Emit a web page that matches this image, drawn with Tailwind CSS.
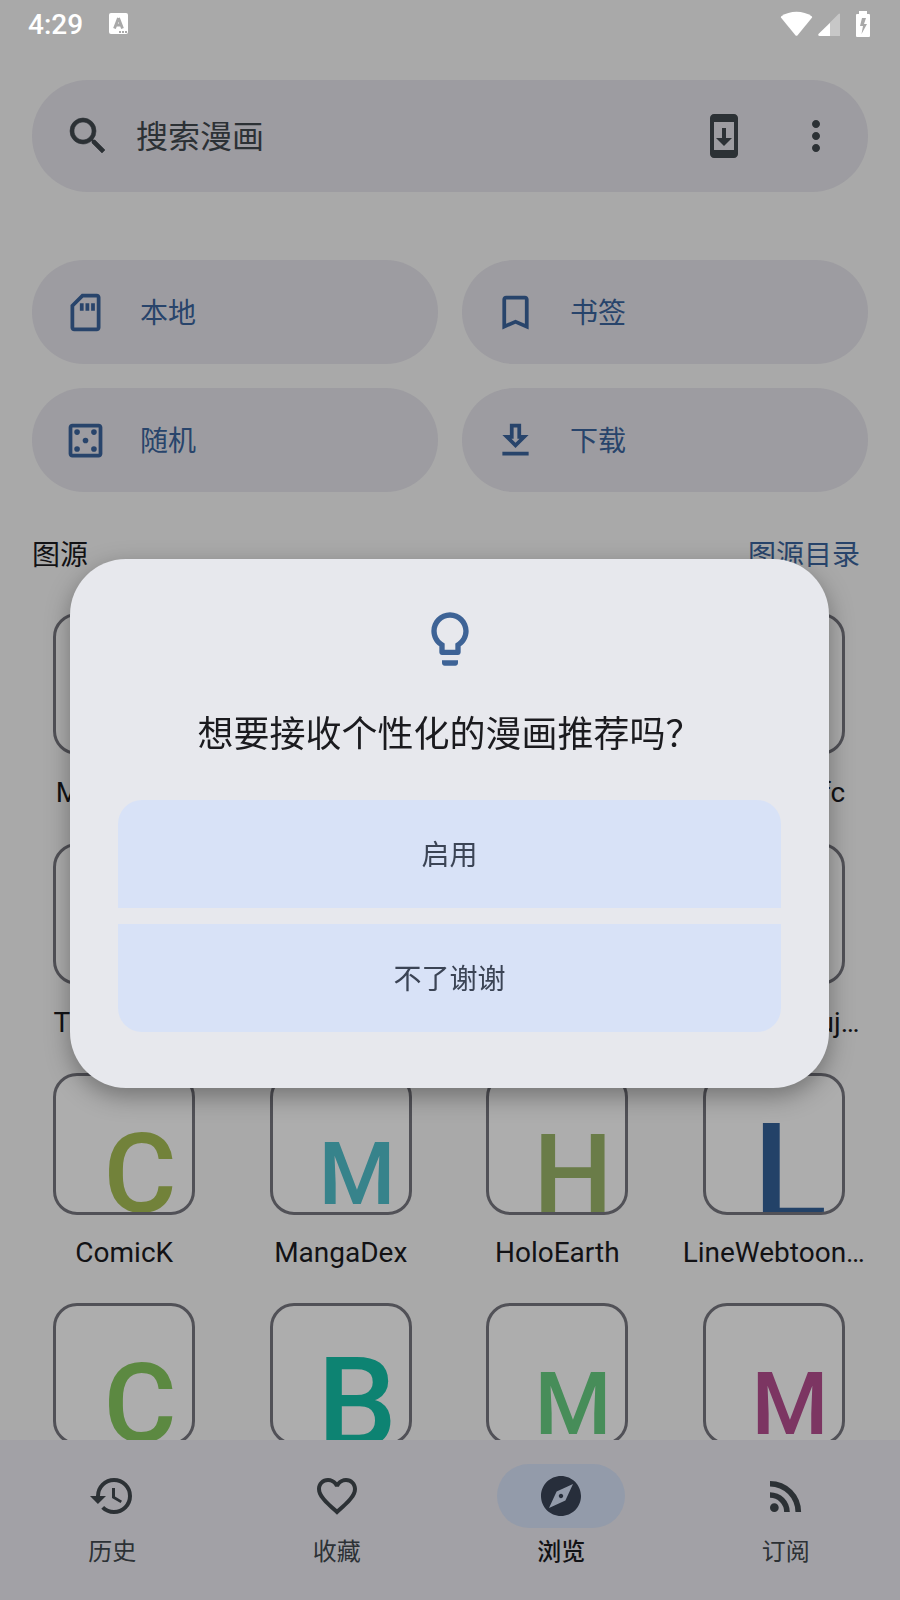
<!DOCTYPE html>
<html lang="zh-CN">
  <head>
    <meta charset="utf-8" />
    <meta name="viewport" content="width=device-width, initial-scale=1.0" />
    <title>浏览</title>
    <script src="https://cdn.jsdelivr.net/npm/@tailwindcss/browser@4"></script>
  </head>
  <body class="flex h-screen flex-col overflow-hidden bg-[#a9a9a9] font-[Roboto,'Noto_Sans_CJK_SC',sans-serif] text-[28px] leading-8 text-[#121215]">
    <!-- status bar -->
    <div class="flex h-12 shrink-0 items-center pr-[30px] pl-7 text-white">
      <span class="pt-0.5 font-medium">4:29</span>
      <svg class="ml-[26px] h-[22px] w-[19px]" viewBox="0 0 19 22" aria-hidden="true">
        <rect y="0" width="19" height="21" rx="2" fill="#fff" />
        <path d="M9.500 5 5.500 15.500M9.500 5 13.500 15.500M6.500 12h6" fill="none" stroke="#a9a9a9" stroke-width="2.800" />
        <path d="M10 18h2v2h-2zM13 18h2v2h-2zM16 18h2v2h-2z" fill="#a9a9a9" />
      </svg>
      <svg class="ml-auto h-[26px] w-[90px]" viewBox="0 0 90 26" fill="#fff" aria-hidden="true">
        <path d="M1.300 5.300C9.500-.7 23.500-.7 31.700 5.300Q32.500 6 31.900 6.800L17.600 24.200Q16.500 25.200 15.400 24.200L1.100 6.800Q.5 6 1.300 5.300Z" />
        <path d="M60 3v22H39.500q-2-.5-1-2L58 3.500Q59.500 2 60 3Z" fill-opacity=".35" />
        <path d="M50 12v13H39.500q-2-.5-1-2Z" />
        <path fill-rule="evenodd" d="M79 0h8v3h2q1 0 1 1v21q0 1-1 1H77q-1 0-1-1V4q0-1 1-1h2zM82 7l-2 8h3l-1.500 8 5.500-10h-3l2-6z" />
      </svg>
    </div>

    <main class="min-h-0 flex-1 overflow-hidden px-8 pt-8">
      <form class="flex items-center rounded-full bg-[#9d9ca1] px-7 py-8 text-[#2c3135]" role="search">
        <label for="search" aria-label="搜索" class="ml-1">
          <svg class="size-12" viewBox="0 0 24 24" fill="currentColor" stroke="currentColor" stroke-width=".3"><path d="M15.500 14h-.79l-.28-.27A6.471 6.471 0 0 0 16 9.500 6.500 6.500 0 1 0 9.500 16c1.610 0 3.090-.59 4.230-1.570l.27.28v.79l5 4.990L20.490 19l-4.990-5zm-6 0C7.010 14 5 11.990 5 9.500S7.010 5 9.500 5 14 7.010 14 9.500 11.990 14 9.500 14z" /></svg>
        </label>
        <input id="search" type="text" placeholder="搜索漫画" class="ml-6 min-w-0 flex-1 bg-transparent pt-0.5 text-[32px] leading-10 outline-none placeholder:text-[#2c3135]" />
        <button type="button" aria-label="更新图源">
          <svg class="size-12" viewBox="0 0 24 24" fill="currentColor"><path d="M17 1.010 7 1c-1.100 0-2 .9-2 2v18c0 1.100.9 2 2 2h10c1.100 0 2-.9 2-2V3c0-1.100-.9-1.990-2-1.990zM17 19H7V5h10v14zm-1-6h-3V8h-2v5H8l4 4 4-4z" /></svg>
        </button>
        <button type="button" aria-label="更多选项" class="ml-11">
          <svg class="size-12" viewBox="0 0 24 24" fill="currentColor"><path d="M12 8c1.100 0 2-.9 2-2s-.9-2-2-2-2 .9-2 2 .9 2 2 2zm0 2c-1.100 0-2 .9-2 2s.9 2 2 2 2-.9 2-2-.9-2-2-2zm0 6c-1.100 0-2 .9-2 2s.9 2 2 2 2-.9 2-2-.9-2-2-2z" /></svg>
        </button>
      </form>

      <div class="mt-[68px] grid grid-cols-2 gap-6 text-[#28446b]">
        <button class="flex h-[104px] items-center gap-8 rounded-full bg-[#9d9ca1] pl-[31px]">
          <svg class="size-[45px]" viewBox="0 0 24 24" fill="currentColor"><path d="M18 2h-8L4 8v12c0 1.100.9 2 2 2h12c1.100 0 2-.9 2-2V4c0-1.100-.9-2-2-2zm0 18H6V8.830L10.830 4H18v16zM9 7h2v4H9zm3 0h2v4h-2zm3 0h2v4h-2z" /></svg>
          <span class="pt-1">本地</span>
        </button>
        <button class="flex h-[104px] items-center gap-8 rounded-full bg-[#9d9ca1] pl-[31px]">
          <svg class="size-[45px]" viewBox="0 0 24 24" fill="currentColor"><path d="M17 3H7c-1.100 0-2 .9-2 2v16l7-3 7 3V5c0-1.100-.9-2-2-2zm0 15-5-2.180L7 18V5h10v13z" /></svg>
          <span class="pt-1">书签</span>
        </button>
        <button class="flex h-[104px] items-center gap-8 rounded-full bg-[#9d9ca1] pl-[31px]">
          <svg class="size-[45px]" viewBox="0 0 24 24" fill="currentColor"><path d="M19 5v14H5V5h14m0-2H5c-1.100 0-2 .9-2 2v14c0 1.100.9 2 2 2h14c1.100 0 2-.9 2-2V5c0-1.100-.9-2-2-2z" /><circle cx="7.500" cy="7.500" r="1.500" /><circle cx="16.500" cy="7.500" r="1.500" /><circle cx="12" cy="12" r="1.500" /><circle cx="7.500" cy="16.500" r="1.500" /><circle cx="16.500" cy="16.500" r="1.500" /></svg>
          <span class="pt-1">随机</span>
        </button>
        <button class="flex h-[104px] items-center gap-8 rounded-full bg-[#9d9ca1] pl-[31px]">
          <svg class="size-[45px]" viewBox="0 0 24 24" fill="currentColor"><path d="M19 9h-4V3H9v6H5l7 7 7-7zm-8 2V5h2v6h1.170L12 13.170 9.830 11H11zm-6 7h14v2H5z" /></svg>
          <span class="pt-1">下载</span>
        </button>
      </div>

      <div class="mt-12 flex justify-between pr-2">
        <h2>图源</h2>
        <a href="#" class="text-[#28446b]">图源目录</a>
      </div>

      <ul id="source-list" class="-mx-4 mt-[41px] grid grid-cols-4 gap-y-[34px] pr-0.5"></ul>
    </main>

    <nav class="grid shrink-0 grid-cols-4 bg-[#a2a1a6] pt-6 pr-0.5 pb-8 text-2xl text-[#2c3135]">
      <a href="#" class="flex flex-col items-center gap-2">
        <span class="rounded-full px-10 py-2"><svg class="size-12" viewBox="0 0 24 24" fill="currentColor"><path d="M13.500 8H12v5l4.280 2.540.72-1.210-3.500-2.080V8M13 3a9 9 0 0 0-9 9H1l3.960 4.030L9 12H6a7 7 0 0 1 7-7 7 7 0 0 1 7 7 7 7 0 0 1-7 7c-1.930 0-3.680-.79-4.940-2.060l-1.420 1.420C8.270 20 10.500 21 13 21a9 9 0 0 0 9-9 9 9 0 0 0-9-9" /></svg></span>
        历史
      </a>
      <a href="#" class="flex flex-col items-center gap-2">
        <span class="rounded-full px-10 py-2"><svg class="size-12" viewBox="0 0 24 24" fill="currentColor"><path d="M16.500 3c-1.740 0-3.410.81-4.500 2.090C10.910 3.810 9.240 3 7.500 3 4.420 3 2 5.420 2 8.500c0 3.780 3.400 6.860 8.550 11.540L12 21.350l1.450-1.320C18.600 15.360 22 12.280 22 8.500 22 5.420 19.580 3 16.500 3zm-4.400 15.550-.1.100-.1-.1C7.140 14.240 4 11.390 4 8.500 4 6.500 5.500 5 7.500 5c1.540 0 3.040.99 3.570 2.360h1.870C13.460 5.990 14.960 5 16.500 5c2 0 3.500 1.500 3.500 3.500 0 2.890-3.140 5.740-7.900 10.050z" /></svg></span>
        收藏
      </a>
      <a href="#" aria-current="page" class="flex flex-col items-center gap-2 font-medium text-[#121215]">
        <span class="rounded-full bg-[#939baa] px-10 py-2 text-[#272e3b]"><svg class="size-12" viewBox="0 0 24 24" fill="currentColor"><path d="M12 10.900c-.61 0-1.100.49-1.100 1.100s.49 1.100 1.100 1.100c.61 0 1.100-.49 1.100-1.100s-.49-1.100-1.100-1.100zM12 2C6.480 2 2 6.480 2 12s4.480 10 10 10 10-4.480 10-10S17.520 2 12 2zm2.190 12.190L6 18l3.810-8.190L18 6l-3.810 8.190z" /></svg></span>
        浏览
      </a>
      <a href="#" class="flex flex-col items-center gap-2">
        <span class="rounded-full px-10 py-2"><svg class="size-12" viewBox="0 0 24 24" fill="currentColor"><path d="M6.180 15.640a2.180 2.180 0 0 1 2.180 2.180C8.360 19 7.380 20 6.180 20 5 20 4 19 4 17.820a2.180 2.180 0 0 1 2.180-2.180M4 4.440A15.560 15.560 0 0 1 19.560 20h-2.830A12.730 12.730 0 0 0 4 7.270V4.440m0 5.660a9.900 9.900 0 0 1 9.900 9.900h-2.830A7.070 7.070 0 0 0 4 12.930V10.100z" /></svg></span>
        订阅
      </a>
    </nav>

    <!-- suggestion dialog -->
    <div class="fixed inset-0 flex items-center justify-center pt-[47px] pr-[71px] pl-[70px]">
      <section role="dialog" aria-labelledby="dialog-title" class="flex w-full flex-col items-center rounded-[56px] bg-[#e7e8ed] px-12 pt-12 pb-14 shadow-[0_8px_24px_rgba(0,0,0,0.34)]">
        <svg class="size-16 text-[#3e6396]" viewBox="0 0 24 24" fill="currentColor" aria-hidden="true"><path d="M9 21c0 .55.45 1 1 1h4c.55 0 1-.45 1-1v-1H9v1zm3-19C8.140 2 5 5.140 5 9c0 2.380 1.190 4.470 3 5.740V17c0 .55.45 1 1 1h6c.55 0 1-.45 1-1v-2.260c1.810-1.270 3-3.360 3-5.740 0-3.860-3.140-7-7-7zm2.850 11.100-.85.6V16h-4v-2.300l-.85-.6A4.997 4.997 0 0 1 7 9c0-2.760 2.240-5 5-5s5 2.240 5 5c0 1.630-.8 3.160-2.150 4.100z" /></svg>
        <h1 id="dialog-title" class="mt-10 text-4xl leading-12 text-[#1b1b1f]">想要接收个性化的漫画推荐吗？</h1>
        <div class="mt-[41px] flex w-full flex-col gap-4 text-[#3b4455]">
          <button class="rounded-t-3xl bg-[#d8e2f7] pt-10 pb-9">启用</button>
          <button class="rounded-b-3xl bg-[#d8e2f7] pt-10 pb-9">不了谢谢</button>
        </div>
      </section>
    </div>

    <script>
      // letters are scaled to a common width, so the size differs per glyph
      const sources = [
        { name: "MangaHub", letter: "M", size: 88, baseline: 131, color: "#7c3562" },
        { name: "MangaLib", letter: "M", size: 88, baseline: 131, color: "#478d59" },
        { name: "Bato.to", letter: "B", size: 126, baseline: 144, color: "#0d8372" },
        { name: "MangaRafc", letter: "M", size: 88, baseline: 131, color: "#37838b" },
        { name: "TrueManga", letter: "T", size: 112, baseline: 140, color: "#5c8941" },
        { name: "Comico", letter: "C", size: 112, baseline: 139, color: "#72823a" },
        { name: "HeanCms", letter: "H", size: 112, baseline: 140, color: "#6a7c48" },
        { name: "MangaHeruj…", letter: "M", size: 88, baseline: 131, color: "#234268" },
        { name: "ComicK", letter: "C", size: 112, baseline: 139, color: "#72823a" },
        { name: "MangaDex", letter: "M", size: 88, baseline: 131, color: "#37838b" },
        { name: "HoloEarth", letter: "H", size: 112, baseline: 140, color: "#6a7c48" },
        { name: "LineWebtoon…", letter: "L", size: 137, baseline: 148, color: "#234268" },
        { name: "ComX", letter: "C", size: 112, baseline: 139, color: "#5c8941" },
        { name: "BatCave", letter: "B", size: 126, baseline: 144, color: "#0d8372" },
        { name: "MangaOwl", letter: "M", size: 88, baseline: 131, color: "#478d59" },
        { name: "MangaTown", letter: "M", size: 88, baseline: 131, color: "#7c3562" },
      ];

      const sourceList = document.getElementById("source-list");
      sources.forEach((source) => {
        const li = document.createElement("li");
        li.innerHTML = `
          <a href="#" class="flex flex-col items-center gap-[22px]">
            <span class="w-[142px] overflow-hidden rounded-3xl border-3 border-[#515157] bg-[#adadad]">
              <svg class="block w-full" viewBox="3 3 136 136" aria-hidden="true">
                <text x="87" y="${source.baseline}" font-size="${source.size}" fill="${source.color}" text-anchor="middle" class="font-medium">${source.letter}</text>
              </svg>
            </span>
            <span class="whitespace-nowrap">${source.name}</span>
          </a>`;
        sourceList.appendChild(li);
      });
    </script>
  </body>
</html>
